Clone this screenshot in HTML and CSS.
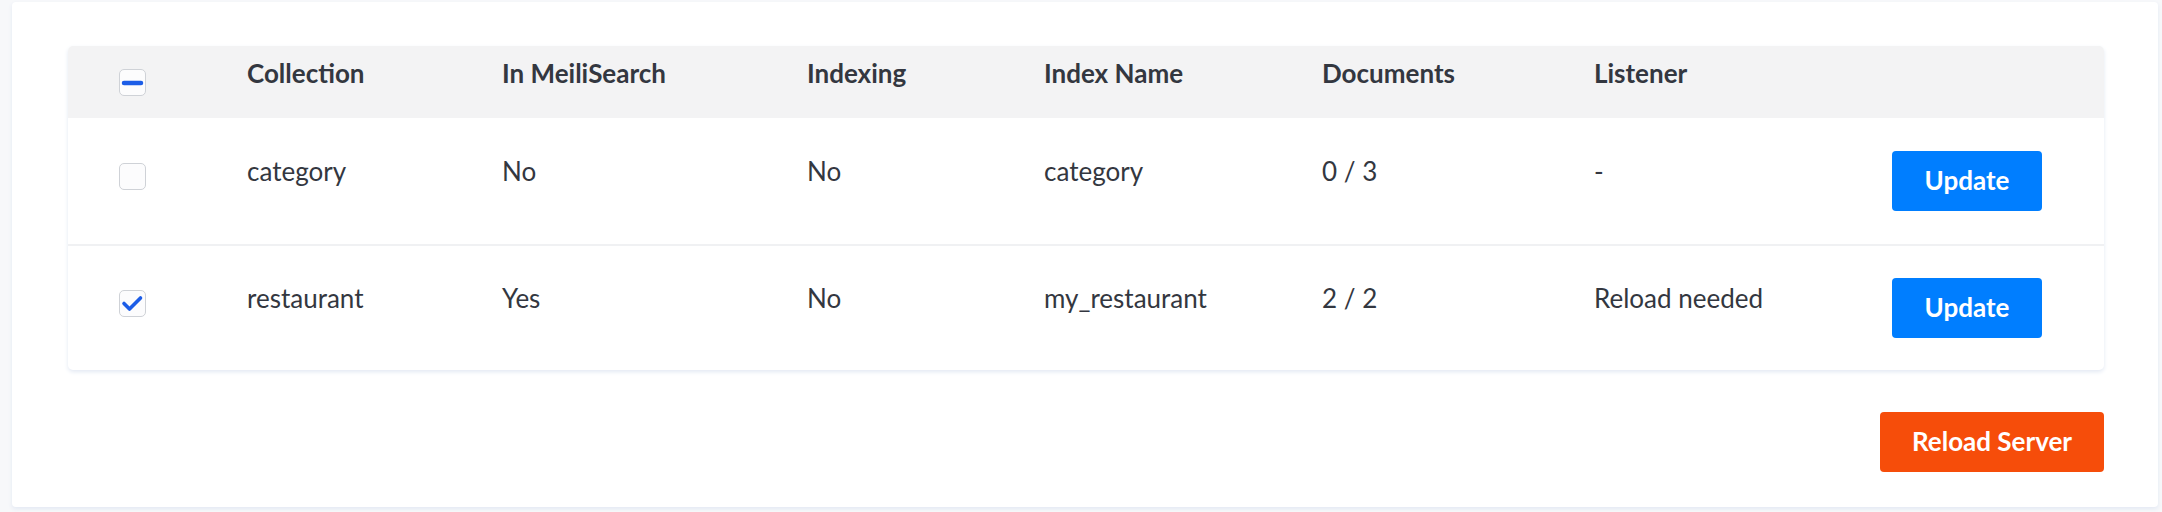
FILE: index.html
```html
<!DOCTYPE html>
<html lang="en">
<head>
<meta charset="utf-8">
<title>MeiliSearch collections</title>
<link rel="stylesheet" href="styles.css">
</head>
<body>
<main class="card">
  <div class="table">
    <div class="row head">
      <div class="cell check-cell">
        <span class="checkbox">
          <svg viewBox="0 0 27 27" width="27" height="27"><line x1="5" y1="14" x2="22" y2="14" stroke="#1c5de7" stroke-width="4.5" stroke-linecap="round"/></svg>
        </span>
      </div>
      <div class="cell th">Collection</div>
      <div class="cell th">In MeiliSearch</div>
      <div class="cell th">Indexing</div>
      <div class="cell th">Index Name</div>
      <div class="cell th">Documents</div>
      <div class="cell th">Listener</div>
      <div class="cell"></div>
    </div>
    <div class="row body sep">
      <div class="cell check-cell"><span class="checkbox"></span></div>
      <div class="cell td">category</div>
      <div class="cell td">No</div>
      <div class="cell td">No</div>
      <div class="cell td">category</div>
      <div class="cell td">0 / 3</div>
      <div class="cell td">-</div>
      <div class="cell"><button class="btn btn-primary">Update</button></div>
    </div>
    <div class="row body last">
      <div class="cell check-cell">
        <span class="checkbox">
          <svg viewBox="0 0 27 27" width="27" height="27"><polyline points="5,13.5 10.5,19 21.5,8" fill="none" stroke="#1c5de7" stroke-width="3.6" stroke-linecap="round" stroke-linejoin="round"/></svg>
        </span>
      </div>
      <div class="cell td">restaurant</div>
      <div class="cell td">Yes</div>
      <div class="cell td">No</div>
      <div class="cell td">my_restaurant</div>
      <div class="cell td">2 / 2</div>
      <div class="cell td">Reload needed</div>
      <div class="cell"><button class="btn btn-primary">Update</button></div>
    </div>
  </div>
  <div class="actions">
    <button class="btn btn-danger">Reload Server</button>
  </div>
</main>
</body>
</html>
```
FILE: styles.css
```css
html, body {
  margin: 0;
  padding: 0;
}
body {
  background: #f7f8fa;
  font-family: Lato, "Noto Sans", sans-serif;
  color: #333740;
  padding: 2px 4px 5px 12px;
  height: 512px;
  box-sizing: border-box;
}
.card {
  background: #ffffff;
  border-radius: 4px;
  box-shadow: 0 2px 4px #e3e9f3;
  padding: 44px 54px 35px 56px;
  height: 505px;
  box-sizing: border-box;
}
.table {
  border-radius: 5px;
  box-shadow: 0 2px 4px #e3e9f3;
  background: #fff;
  overflow: hidden;
}
.row {
  display: grid;
  grid-template-columns: 179px 255px 305px 237px 278px 272px 298px 212px;
  align-items: center;
}
.head {
  background: #f3f3f4;
  height: 72px;
}
.body.sep {
  height: 126px;
  border-bottom: 2px solid #f0f1f3;
}
.body.last {
  height: 124px;
}
.cell {
  font-size: 26px;
  line-height: 32px;
  white-space: nowrap;
}
.th {
  font-weight: 700;
  padding-bottom: 19px;
}
.td {
  font-weight: 400;
  padding-bottom: 21px;
}
.check-cell {
  padding-left: 51px;
  display: flex;
}
.body .check-cell {
  padding-bottom: 10px;
}
.checkbox {
  width: 27px;
  height: 27px;
  box-sizing: border-box;
  border: 1.5px solid #cfd2d7;
  border-radius: 5px;
  background: #fcfcfd;
  display: flex;
  align-items: center;
  justify-content: center;
  overflow: hidden;
}
.checkbox svg {
  flex: none;
  margin: -1.5px;
}
.btn {
  font-family: Lato, "Noto Sans", sans-serif;
  font-size: 26px;
  font-weight: 700;
  color: #ffffff;
  border: none;
  border-radius: 4px;
  height: 60px;
  padding: 0 0 3px;
  cursor: pointer;
}
.btn-primary {
  background: #007eff;
  width: 150px;
}
.btn-danger {
  background: #f64d0a;
  width: 224px;
}
.actions {
  display: flex;
  justify-content: flex-end;
  margin-top: 42px;
}
```
